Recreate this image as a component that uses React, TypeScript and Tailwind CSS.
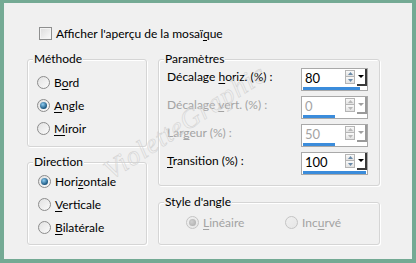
import React from "react";

const font = { fontFamily: 'Lato, "Noto Sans", sans-serif' };

function Key({ text, k }: { text: string; k: number }) {
  // underline the access key letter
  return (
    <>
      {text.slice(0, k)}
      <span className="underline underline-offset-2">{text[k]}</span>
      {text.slice(k + 1)}
    </>
  );
}

function Radio({ checked, disabled }: { checked?: boolean; disabled?: boolean }) {
  return (
    <span
      className={`flex h-[13px] w-[13px] shrink-0 items-center justify-center rounded-full border ${
        disabled
          ? "border-[#c4c4c4] bg-gradient-to-br from-[#f0f0f0] to-[#e6e6e6]"
          : "border-[#8c8c8c] bg-gradient-to-br from-[#e2e2e2] to-[#fafafa]"
      }`}
    >
      {checked && (
        <span
          className={`h-[7px] w-[7px] rounded-full ${
            disabled
              ? "bg-[radial-gradient(circle_at_40%_40%,#d0d0d0,#a8a8a8)]"
              : "bg-[radial-gradient(circle_at_40%_35%,#8fcdf2,#18557f_70%)]"
          }`}
        />
      )}
    </span>
  );
}

function RadioRow({ label, k, checked }: { label: string; k: number; checked?: boolean }) {
  return (
    <div className="flex h-[13px] items-center gap-[4px] text-[12px] text-black">
      <Radio checked={checked} />
      <span className="leading-none">
        <Key text={label} k={k} />
      </span>
    </div>
  );
}

function Group({
  title,
  className,
  children,
}: {
  title: string;
  className: string;
  children: React.ReactNode;
}) {
  return (
    <div
      className={`relative rounded-[3px] border border-[#d5d5d5] shadow-[inset_1px_1px_0_#fff,1px_1px_0_#fff] ${className}`}
    >
      <span className="absolute left-[5px] top-[-9px] bg-[#f0f0f0] px-[1px] text-[12px] leading-[16px] text-black">
        {title}
      </span>
      {children}
    </div>
  );
}

function Spin({
  value,
  min,
  max,
  disabled,
}: {
  value: number;
  min: number;
  max: number;
  disabled?: boolean;
}) {
  const barW = Math.round(((value - min) / (max - min)) * 63);
  const arrow = disabled ? "#b8b8b8" : "#6a8aa8";
  return (
    <div className="flex h-[23px] w-[67px] flex-col border border-[#a9a9a9] bg-white">
      <div className="flex h-[17px]">
        <span
          className={`flex-1 pl-[3px] pt-[2px] text-[13px] leading-[15px] ${
            disabled ? "text-[#a3a3a3]" : "text-black"
          }`}
        >
          {value}
        </span>
        <div className="mr-[2px] mt-[1px] flex flex-col">
          <span className="flex h-[7px] w-[10px] items-center justify-center border border-[#b5b5b5] bg-gradient-to-b from-[#fafafa] to-[#e2e2e2]">
            <svg width="5" height="3" viewBox="0 0 5 3">
              <path d="M0 3 L2.5 0 L5 3 Z" fill={arrow} />
            </svg>
          </span>
          <span className="flex h-[7px] w-[10px] items-center justify-center border border-t-0 border-[#b5b5b5] bg-gradient-to-b from-[#fafafa] to-[#e2e2e2]">
            <svg width="5" height="3" viewBox="0 0 5 3">
              <path d="M0 0 L2.5 3 L5 0 Z" fill={arrow} />
            </svg>
          </span>
        </div>
        <span
          className={`flex h-[17px] w-[10px] items-center justify-center border-b-2 border-r-2 bg-white ${
            disabled ? "border-[#9a9a9a]" : "border-[#3a3a3a]"
          }`}
        >
          <svg width="6" height="3" viewBox="0 0 6 3">
            <path d="M0 0 L3 3 L6 0 Z" fill={disabled ? "#a0a0a0" : "#000"} />
          </svg>
        </span>
      </div>
      <div className="mt-[1px] h-[3px] pl-[1px]">
        <div className="h-[3px] bg-[#3b8cdb]" style={{ width: barW }} />
      </div>
    </div>
  );
}

function ParamRow({
  children,
  disabled,
  spin,
}: {
  children: React.ReactNode;
  disabled?: boolean;
  spin: React.ReactNode;
}) {
  return (
    <div className="flex h-[23px] items-start justify-between">
      <span
        className={`pt-[1px] text-[12px] leading-[16px] ${
          disabled ? "text-[#a3a3a3]" : "text-black"
        }`}
      >
        {children}
      </span>
      {spin}
    </div>
  );
}

export default function App() {
  return (
    <div className="h-[263px] w-[416px] bg-[#74aa94] pb-[4px] pl-[4px] pr-[4px] pt-[3px]" style={font}>
      <div className="relative h-full w-full overflow-hidden bg-[#f0f0f0] pl-[23px] pt-[24px]">
        {/* checkbox */}
        <div className="ml-[12px] flex h-[13px] items-center gap-[4px] text-[12px] text-black">
          <span className="h-[13px] w-[13px] border border-[#8e8f8f] bg-gradient-to-br from-[#dcdcdc] to-[#fbfbfb] shadow-[inset_0_0_0_1px_#f4f4f4]" />
          <span className="leading-none">
            <Key text="Afficher l'aperçu de la mosaïque" k={29} />
          </span>
        </div>

        <div className="mt-[19px] flex gap-[11px]">
          {/* left column */}
          <div className="flex w-[120px] flex-col gap-[15px]">
            <Group title="Méthode" className="h-[88px]">
              <div className="flex flex-col gap-[10px] pl-[9px] pt-[16px]">
                <RadioRow label="Bord" k={1} />
                <RadioRow label="Angle" k={0} checked />
                <RadioRow label="Miroir" k={0} />
              </div>
            </Group>
            <Group title="Direction" className="h-[83px]">
              <div className="flex flex-col gap-[10px] pl-[10px] pt-[12px]">
                <RadioRow label="Horizontale" k={4} checked />
                <RadioRow label="Verticale" k={0} />
                <RadioRow label="Bilatérale" k={0} />
              </div>
            </Group>
          </div>

          {/* right column */}
          <div className="flex w-[222px] flex-col gap-[16px]">
            <Group title="Paramètres" className="h-[127px]">
              <div className="flex flex-col gap-[5px] pl-[8px] pr-[11px] pt-[8px]">
                <ParamRow spin={<Spin value={80} min={-100} max={100} />}>
                  <Key text="Décalage horiz. (%) :" k={9} />
                </ParamRow>
                <ParamRow disabled spin={<Spin value={0} min={-100} max={100} disabled />}>
                  <Key text="Décalage vert. (%) :" k={9} />
                </ParamRow>
                <ParamRow disabled spin={<Spin value={50} min={0} max={100} disabled />}>
                  <Key text="Largeur (%) :" k={3} />
                </ParamRow>
                <ParamRow spin={<Spin value={100} min={0} max={100} />}>
                  <Key text="Transition (%) :" k={0} />
                </ParamRow>
              </div>
            </Group>
            <Group title="Style d'angle" className="h-[43px]">
              <div className="flex pl-[27px] pt-[13px] text-[12px] text-[#a3a3a3]">
                <div className="flex w-[99px] items-center gap-[4px]">
                  <Radio checked disabled />
                  <span className="leading-none">
                    <Key text="Linéaire" k={0} />
                  </span>
                </div>
                <div className="flex items-center gap-[4px]">
                  <Radio disabled />
                  <span className="leading-none">
                    <Key text="Incurvé" k={3} />
                  </span>
                </div>
              </div>
            </Group>
          </div>
        </div>

        {/* watermark */}
        <div
          className="pointer-events-none absolute left-[181px] top-[119px] -translate-x-1/2 -translate-y-1/2 -rotate-[33deg] whitespace-nowrap text-[27px] italic tracking-[1px] text-transparent [-webkit-text-stroke:0.5px_#cfcfcf]"
          style={{ fontFamily: '"Liberation Serif", serif' }}
        >
          VioletteGraphic
        </div>
      </div>
    </div>
  );
}
